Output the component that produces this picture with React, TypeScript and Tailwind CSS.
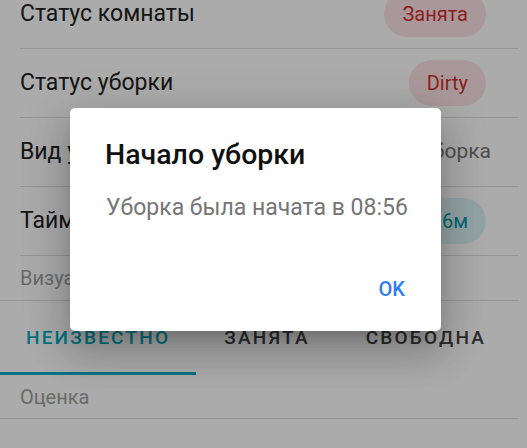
import React from "react";

const rows = [
  { label: "Статус комнаты", chip: "Занята", tone: "red" },
  { label: "Статус уборки", chip: "Dirty", tone: "red" },
  { label: "Вид уборки", value: "Текущая уборка" },
  { label: "Таймер уборки", chip: "0ч 16м", tone: "teal" },
];

const Chip = ({ text, tone }: { text: string; tone: string }) => (
  <span
    className={
      tone === "red"
        ? "inline-flex h-[46px] items-center rounded-full px-[18px] text-[20px] bg-[#fbe3e5] text-[#d32f2f]"
        : "inline-flex h-[46px] items-center rounded-full px-[18px] text-[20px] bg-[#dcf4f6] text-[#0097a7]"
    }
  >
    {text}
  </span>
);

export default function App() {
  return (
    <div className="relative w-[527px] h-[448px] overflow-hidden bg-white" style={{ fontFamily: "Roboto, 'Noto Sans', sans-serif" }}>
      <div className="w-[519px] -mt-[20px]">
        {rows.map((r, i) => (
          <div key={i} className="ml-5 flex h-[69px] items-center justify-between border-b border-[#e0e0e0] pr-[33px]">
            <span className="text-[23px] text-[#212121]">{r.label}</span>
            {r.chip ? (
              <Chip text={r.chip} tone={r.tone!} />
            ) : (
              <span className="text-[21px] text-[#757575] -mr-[5px]">{r.value}</span>
            )}
          </div>
        ))}
        <div className="flex h-[45px] items-center border-b border-[#e0e0e0] pl-5 text-[20px] text-[#9e9e9e]">
          Визуальная оценка
        </div>
        <div className="flex h-[74px]">
          {[
            { t: "НЕИЗВЕСТНО", on: true },
            { t: "ЗАНЯТА", on: false },
            { t: "СВОБОДНА", on: false },
          ].map((tab, i) => (
            <div
              key={i}
              className={
                tab.on
                  ? "flex items-center border-b-[3px] border-[#00acc1] px-[26px] pt-[3px] text-[19px] font-medium tracking-[2.2px] text-[#00acc1]"
                  : "flex items-center border-b-[3px] border-transparent px-[28px] pt-[3px] text-[19px] font-medium tracking-[2.2px] text-[#424242]"
              }
            >
              {tab.t}
            </div>
          ))}
        </div>
        <div className="flex h-[44px] items-center border-b border-[#e0e0e0] pl-5 text-[20px] text-[#9e9e9e]">
          Оценка
        </div>
      </div>

      {/* dim overlay */}
      <div className="absolute inset-0 bg-black/[0.33]" />

      {/* dialog */}
      <div className="absolute left-[70px] top-[108px] flex h-[223px] w-[371px] flex-col rounded-[5px] bg-white shadow-[0_24px_38px_3px_rgba(0,0,0,0.14),0_9px_46px_8px_rgba(0,0,0,0.12),0_11px_15px_-7px_rgba(0,0,0,0.2)]">
        <div className="px-[35px] pt-[30px] text-[28.5px] font-medium leading-[34px] text-[#111]">Начало уборки</div>
        <div className="whitespace-nowrap pl-[36px] pt-[21px] text-[23px] leading-[30px] text-[#757575]">Уборка была начата в 08:56</div>
        <div className="mt-auto flex justify-end pb-[27px] pr-[36px]">
          <span className="text-[20px] font-medium text-[#2f7cf6]">OK</span>
        </div>
      </div>
    </div>
  );
}
